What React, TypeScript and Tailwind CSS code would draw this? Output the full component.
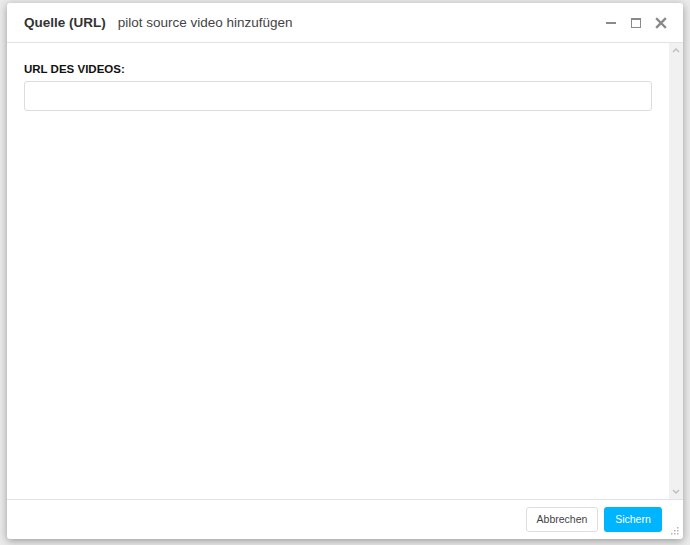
import React from "react";

export default function App() {
  const font = { fontFamily: '"Liberation Sans", Arial, sans-serif' };
  return (
    <div className="w-[690px] h-[545px] bg-[#ebebeb] pt-[3px] pl-[7px] overflow-hidden" style={font}>
      <div className="w-[676px] h-[536px] bg-white rounded-[3px] shadow-[0_2px_8px_rgba(0,0,0,0.35)] flex flex-col relative">
        {/* header */}
        <div className="h-[40px] shrink-0 border-b border-[#e3e3e3] flex items-center pl-[17px] pr-[16px] pt-[1px]">
          <span className="text-[13.5px] font-bold text-[#333]">Quelle (URL)</span>
          <span className="text-[13.5px] text-[#444] ml-[12px]">pilot source video hinzufügen</span>
          <div className="ml-auto flex items-center gap-[13px] text-[#8a8a8a]">
            <svg width="12" height="12" viewBox="0 0 12 12">
              <rect x="1" y="5" width="10" height="2" fill="#8a8a8a" />
            </svg>
            <svg width="12" height="12" viewBox="0 0 12 12">
              <rect x="1.5" y="1.5" width="9" height="9" fill="none" stroke="#8a8a8a" strokeWidth="1" />
              <rect x="1" y="1" width="10" height="2" fill="#8a8a8a" />
            </svg>
            <svg width="12" height="12" viewBox="0 0 12 12">
              <path d="M2 2 L10 10 M10 2 L2 10" stroke="#8a8a8a" strokeWidth="2.4" strokeLinecap="square" />
            </svg>
          </div>
        </div>
        {/* body */}
        <div className="flex-1 flex min-h-0">
          <div className="flex-1 pl-[17px] pr-[17px] pt-[19px]">
            <div className="text-[11.5px] font-bold text-[#111] leading-[14px]">URL DES VIDEOS:</div>
            <input
              className="mt-[5px] block w-full h-[30px] border border-[#dcdcdc] rounded-[3px] outline-none px-2 text-[13px]"
              style={font}
            />
          </div>
          <div className="w-[14px] bg-[#f1f1f1] flex flex-col items-center justify-between py-[4px]">
            <svg width="8" height="6" viewBox="0 0 8 6">
              <path d="M1 5 L4 2 L7 5" fill="none" stroke="#bdbdbd" strokeWidth="1.4" />
            </svg>
            <svg width="8" height="6" viewBox="0 0 8 6">
              <path d="M1 1 L4 4 L7 1" fill="none" stroke="#bdbdbd" strokeWidth="1.4" />
            </svg>
          </div>
        </div>
        {/* footer */}
        <div className="h-[40px] shrink-0 border-t border-[#e3e3e3] flex items-start justify-end pt-[7px] pr-[21px] gap-[6px]">
          <button className="h-[25px] w-[72px] border border-[#dedede] rounded-[3px] bg-white text-[10.5px] text-[#444]" style={font}>
            Abbrechen
          </button>
          <button className="h-[25px] w-[58px] rounded-[3px] bg-[#00b5ff] text-[10.5px] text-white" style={font}>
            Sichern
          </button>
        </div>
        <svg className="absolute right-[3px] bottom-[3px]" width="10" height="10" viewBox="0 0 10 10">
          <rect x="7" y="1" width="1.5" height="1.5" fill="#b5b5b5" />
          <rect x="4" y="4" width="1.5" height="1.5" fill="#b5b5b5" />
          <rect x="7" y="4" width="1.5" height="1.5" fill="#b5b5b5" />
          <rect x="1" y="7" width="1.5" height="1.5" fill="#b5b5b5" />
          <rect x="4" y="7" width="1.5" height="1.5" fill="#b5b5b5" />
          <rect x="7" y="7" width="1.5" height="1.5" fill="#b5b5b5" />
        </svg>
      </div>
    </div>
  );
}
